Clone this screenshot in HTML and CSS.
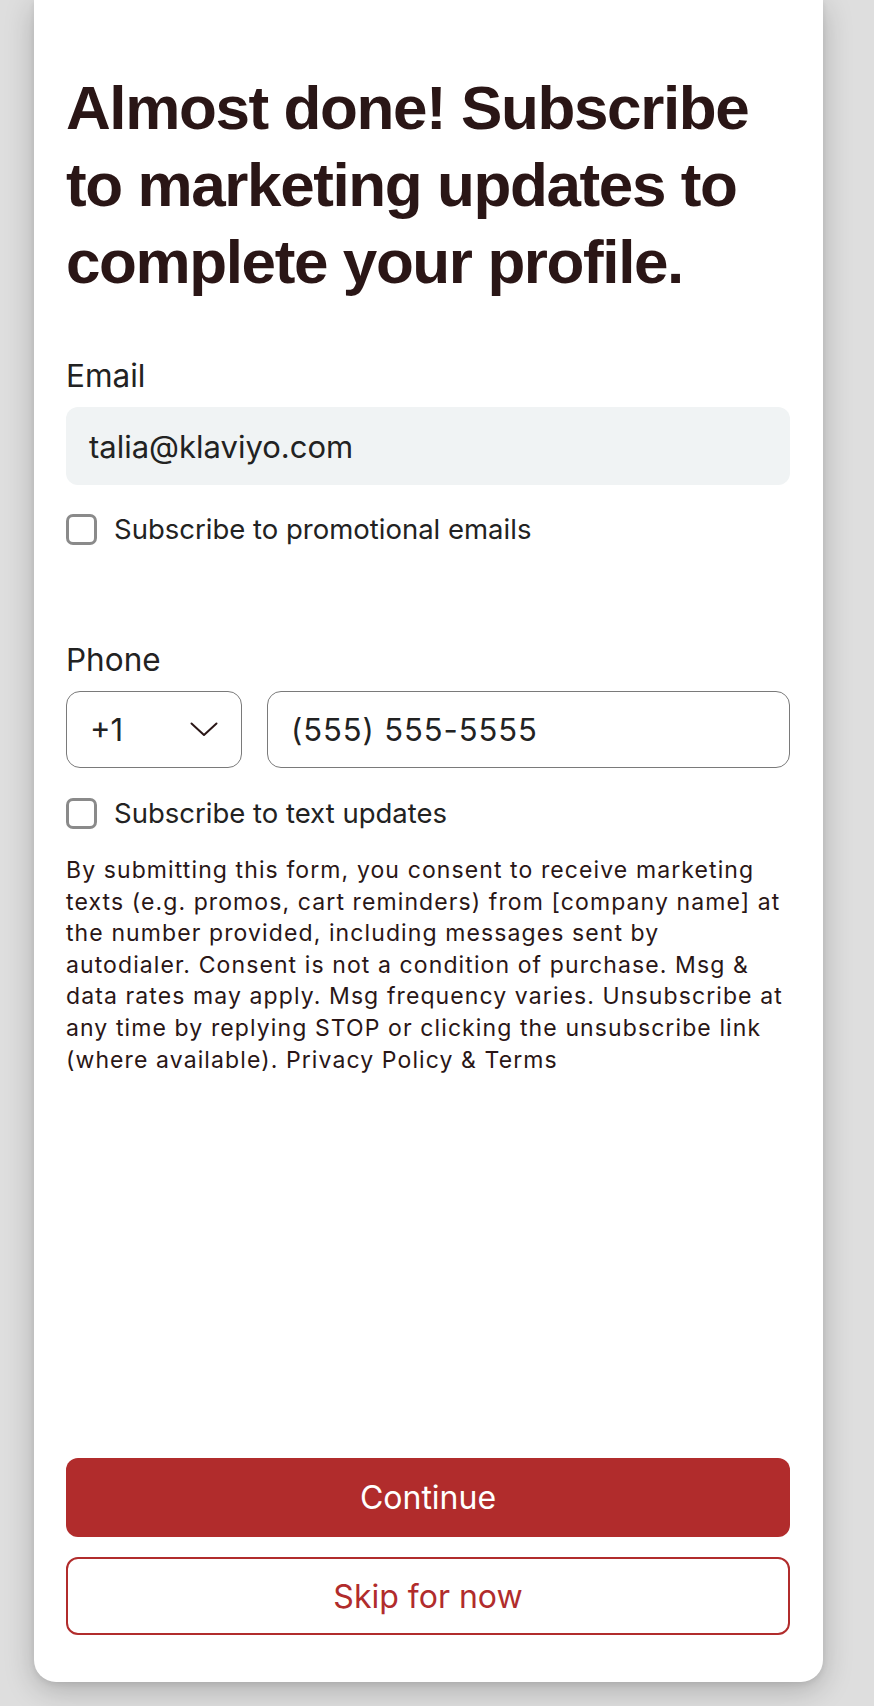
FILE: index.html
```html
<!DOCTYPE html>
<html lang="en">
<head>
<meta charset="utf-8">
<title>Almost done</title>
<link rel="stylesheet" href="styles.css">
</head>
<body>
<div class="page">
  <main class="card">
    <h1 class="title">Almost done! Subscribe to marketing updates to complete your profile.</h1>

    <section class="field email-field">
      <label class="label">Email</label>
      <div class="input filled">talia@klaviyo.com</div>
      <div class="check-row">
        <span class="checkbox"></span>
        <span class="check-text">Subscribe to promotional emails</span>
      </div>
    </section>

    <section class="field phone-field">
      <label class="label">Phone</label>
      <div class="phone-row">
        <div class="input select">
          <span>+1</span>
          <svg class="chevron" width="28" height="15" viewBox="0 0 28 15" aria-hidden="true"><path d="M1.5 1.5 L14 13 L26.5 1.5" fill="none" stroke="#2a1616" stroke-width="2" stroke-linecap="round" stroke-linejoin="round"/></svg>
        </div>
        <div class="input outlined phone-number">(555) 555-5555</div>
      </div>
      <div class="check-row">
        <span class="checkbox"></span>
        <span class="check-text">Subscribe to text updates</span>
      </div>
      <p class="disclaimer">By submitting this form, you consent to receive marketing texts (e.g. promos, cart reminders) from [company name] at the number provided, including messages sent by autodialer. Consent is not a condition of purchase. Msg &amp; data rates may apply. Msg frequency varies. Unsubscribe at any time by replying STOP or clicking the unsubscribe link (where available). Privacy Policy &amp; Terms</p>
    </section>

    <div class="actions">
      <button class="btn primary">Continue</button>
      <button class="btn secondary">Skip for now</button>
    </div>
  </main>
</div>
</body>
</html>
```

FILE: styles.css
```css
* { box-sizing: border-box; }

html, body {
  margin: 0;
  padding: 0;
  background: #dedede;
}

.page {
  width: 874px;
  height: 1706px;
  overflow: hidden;
  padding-left: 34px;
}

.card {
  width: 789px;
  min-height: 1682px;
  background: #ffffff;
  border-radius: 0 0 22px 22px;
  box-shadow: 0 8px 30px rgba(0, 0, 0, 0.22), 0 2px 6px rgba(0, 0, 0, 0.08);
  padding: 69px 33px 47px 32px;
  display: flex;
  flex-direction: column;
  font-family: Inter, "Noto Sans", sans-serif;
  color: #222222;
}

.title {
  margin: 0;
  font-family: "Liberation Sans", Arial, sans-serif;
  font-weight: 700;
  font-size: 62px;
  line-height: 77px;
  letter-spacing: -1.4px;
  color: #2a1616;
}

.field { display: flex; flex-direction: column; }

.email-field { margin-top: 58px; }
.phone-field { margin-top: 97px; }

.label {
  font-size: 31.5px;
  line-height: 36px;
  color: #222222;
}

.input {
  height: 78px;
  margin-top: 13px;
  border-radius: 12px;
  display: flex;
  align-items: center;
  padding: 0 23px;
  font-size: 31px;
  color: #222222;
}

.filled { background: #f0f3f4; }

.outlined, .select {
  border: 1.5px solid #7a7a7a;
  border-radius: 14px;
}

.phone-row {
  display: flex;
  gap: 25px;
  margin-top: 13px;
}

.phone-row .input { margin-top: 0; height: 77px; }

.phone-number { letter-spacing: 0.9px; }

.select {
  width: 176px;
  flex: none;
  justify-content: space-between;
  padding: 0 23px 0 23px;
}

.outlined { flex: 1; }

.chevron { display: block; }

.check-row {
  display: flex;
  align-items: center;
  gap: 17px;
  margin-top: 28px;
}

.phone-field .check-row { margin-top: 29px; }

.checkbox {
  width: 31px;
  height: 31px;
  border: 3px solid #8a8a8a;
  border-radius: 7px;
  flex: none;
}

.check-text {
  font-size: 27.5px;
  line-height: 32px;
  color: #222222;
}

.disclaimer {
  margin: 26px 0 0;
  font-size: 23px;
  line-height: 31.6px;
  letter-spacing: 1.1px;
  color: #2a1616;
}

.actions {
  margin-top: auto;
  display: flex;
  flex-direction: column;
  gap: 20px;
}

.btn {
  height: 79px;
  border-radius: 12px;
  font-family: Inter, "Noto Sans", sans-serif;
  font-size: 32px;
  cursor: pointer;
}

.primary {
  background: #b12c2c;
  border: none;
  color: #ffffff;
}

.secondary {
  height: 78px;
  background: #ffffff;
  border: 2px solid #b12c2c;
  color: #b12c2c;
}
```
